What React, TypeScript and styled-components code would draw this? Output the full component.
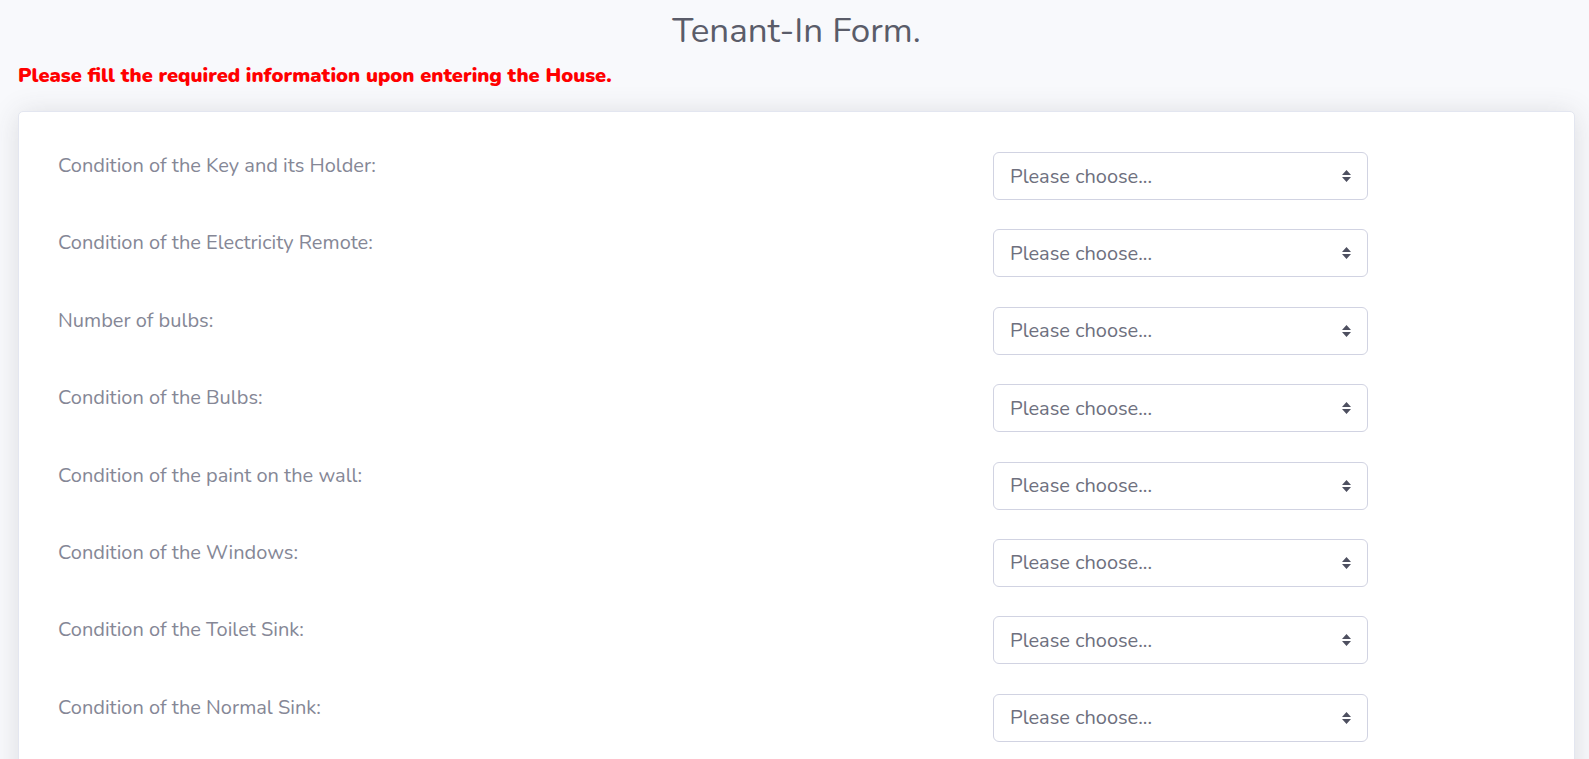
import styled, { createGlobalStyle } from "styled-components";

const GlobalStyle = createGlobalStyle`
    html, body {
        margin: 0;
        padding: 0;
        background: #f8f9fc;
        font-family: "Nunito", "Lato", "Noto Sans", sans-serif;
        color: #858796;
    }
    * {
        box-sizing: border-box;
    }
`;

const Page = styled.div`
    width: 100%;
    min-height: 759px;
    padding: 0 14px 0 18px;
    overflow: hidden;
`;

const Title = styled.h1`
    margin: 0;
    padding-top: 10px;
    text-align: center;
    font-size: 35px;
    font-weight: 400;
    line-height: 42px;
    color: #5a5c69;
`;

const Notice = styled.p`
    margin: 12px 0 0 0;
    font-size: 20px;
    font-weight: 900;
    line-height: 24px;
    color: #ff0000;
`;

const Card = styled.div`
    margin-top: 23px;
    background: #fff;
    border: 1px solid #e3e6f0;
    border-radius: 5px;
    box-shadow: 0 2px 28px 0 rgba(58, 59, 69, 0.15);
    padding: 40px 40px 40px 39px;
`;

const Row = styled.div`
    display: grid;
    grid-template-columns: 935px 375px;
    align-items: start;
    margin-bottom: 29.4px;
`;

const Label = styled.label`
    padding-top: 0;
    font-size: 20px;
    line-height: 28px;
    color: #858796;
`;

const SelectWrap = styled.div`
    position: relative;
    width: 375px;
    height: 48px;
`;

const Select = styled.select`
    appearance: none;
    -webkit-appearance: none;
    width: 100%;
    height: 100%;
    padding: 0 40px 0 16px;
    font-family: inherit;
    font-size: 20px;
    color: #6e707e;
    background: #fff;
    border: 1px solid #d1d3e2;
    border-radius: 6px;
    outline: none;
`;

const Caret = styled.svg`
    position: absolute;
    right: 17px;
    top: 18px;
    pointer-events: none;
`;

const fields = [
    "Condition of the Key and its Holder:",
    "Condition of the Electricity Remote:",
    "Number of bulbs:",
    "Condition of the Bulbs:",
    "Condition of the paint on the wall:",
    "Condition of the Windows:",
    "Condition of the Toilet Sink:",
    "Condition of the Normal Sink:",
];

const App = () => {
    return (
        <>
            <GlobalStyle />
            <Page>
                <Title>Tenant-In Form.</Title>
                <Notice>Please fill the required information upon entering the House.</Notice>
                <Card>
                    {fields.map((f, i) => (
                        <Row key={i}>
                            <Label>{f}</Label>
                            <SelectWrap>
                                <Select defaultValue="">
                                    <option value="" disabled>
                                        Please choose...
                                    </option>
                                    <option>Good</option>
                                    <option>Bad</option>
                                </Select>
                                <Caret width="9" height="12" viewBox="0 0 9 12">
                                    <path d="M4.5 0 L9 5 H0 Z M4.5 12 L0 7 H9 Z" fill="#4e5060" />
                                </Caret>
                            </SelectWrap>
                        </Row>
                    ))}
                </Card>
            </Page>
        </>
    );
};

export default App;
